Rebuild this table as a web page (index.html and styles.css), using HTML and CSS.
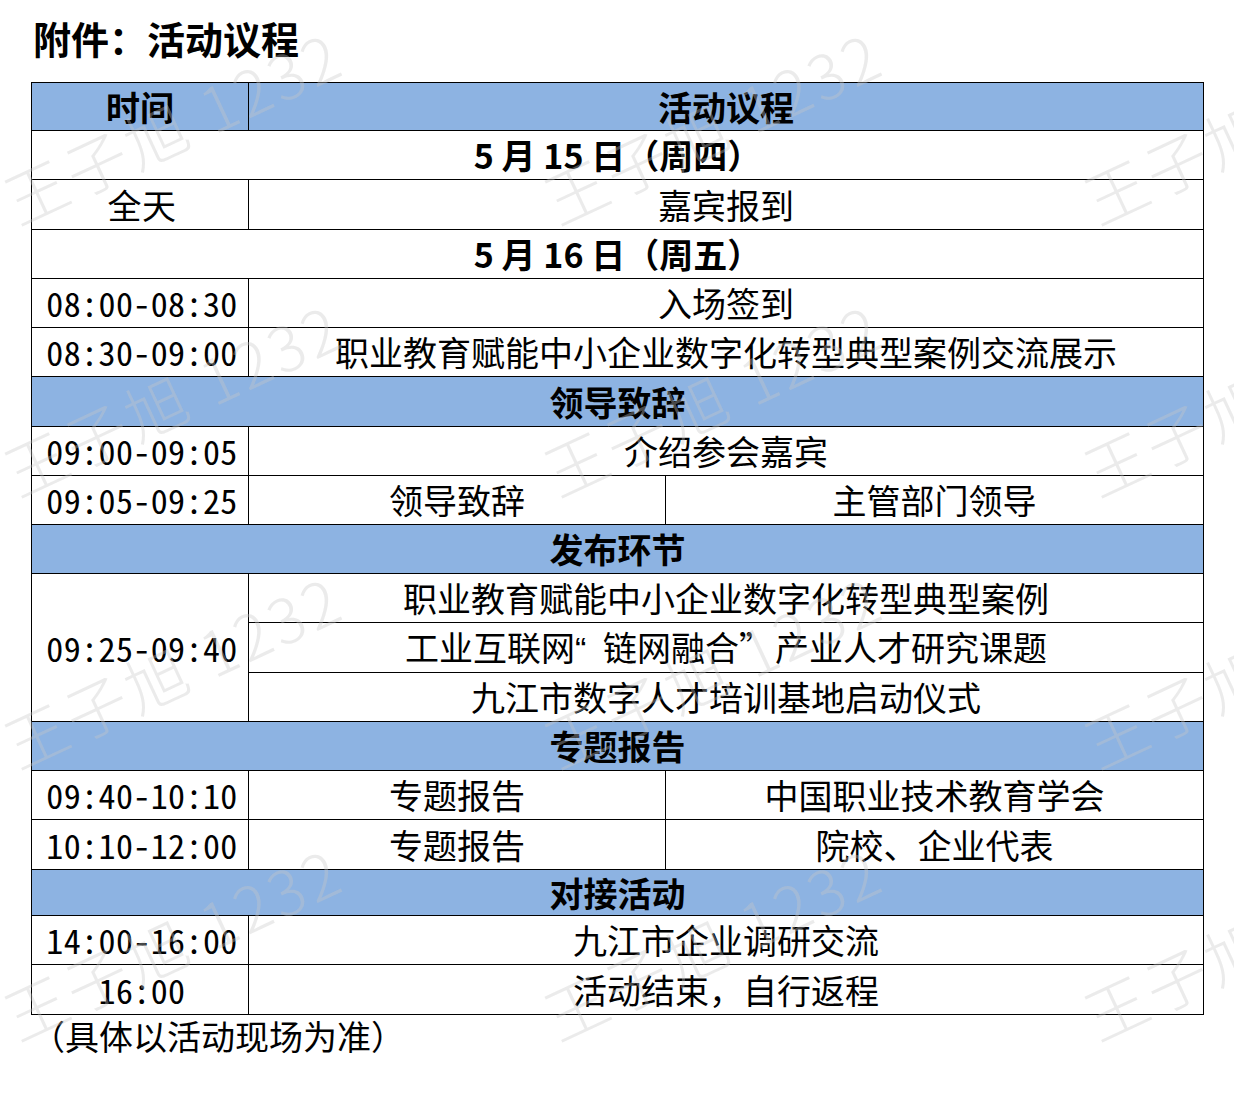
FILE: index.html
```html
<!DOCTYPE html>
<html lang="zh-CN">
<head>
<meta charset="utf-8">
<title>附件：活动议程</title>
<link rel="stylesheet" href="styles.css">
</head>
<body>
<div class="page">
  <h1 class="title">附件：活动议程</h1>
  <table class="agenda">
    <colgroup><col class="c1"><col class="c2"><col class="c3"></colgroup>
    <tr class="band head"><th>时间</th><th colspan="2">活动议程</th></tr>
    <tr class="day"><td colspan="3">5 月 15 日（周四）</td></tr>
    <tr class="tall"><td class="time">全天</td><td colspan="2">嘉宾报到</td></tr>
    <tr class="day"><td colspan="3">5 月 16 日（周五）</td></tr>
    <tr><td class="time">08:00-08:30</td><td colspan="2">入场签到</td></tr>
    <tr><td class="time">08:30-09:00</td><td colspan="2">职业教育赋能中小企业数字化转型典型案例交流展示</td></tr>
    <tr class="band tall"><th colspan="3">领导致辞</th></tr>
    <tr><td class="time">09:00-09:05</td><td colspan="2">介绍参会嘉宾</td></tr>
    <tr><td class="time">09:05-09:25</td><td>领导致辞</td><td>主管部门领导</td></tr>
    <tr class="band"><th colspan="3">发布环节</th></tr>
    <tr><td class="time" rowspan="3">09:25-09:40</td><td colspan="2">职业教育赋能中小企业数字化转型典型案例</td></tr>
    <tr class="tall"><td colspan="2">工业互联网<span class="oq">“</span>链网融合<span class="cq">”</span>产业人才研究课题</td></tr>
    <tr><td colspan="2">九江市数字人才培训基地启动仪式</td></tr>
    <tr class="band"><th colspan="3">专题报告</th></tr>
    <tr><td class="time">09:40-10:10</td><td>专题报告</td><td>中国职业技术教育学会</td></tr>
    <tr class="tall"><td class="time">10:10-12:00</td><td>专题报告</td><td>院校、企业代表</td></tr>
    <tr class="band short"><th colspan="3">对接活动</th></tr>
    <tr><td class="time">14:00-16:00</td><td colspan="2">九江市企业调研交流</td></tr>
    <tr class="tall"><td class="time">16:00</td><td colspan="2">活动结束，自行返程</td></tr>
  </table>
  <p class="note">（具体以活动现场为准）</p>

  <div class="watermark" aria-hidden="true">
    <span class="wm" style="left:7px;top:172px">王子旭 1232</span>
    <span class="wm" style="left:547px;top:172px">王子旭 1232</span>
    <span class="wm" style="left:1087px;top:172px">王子旭 1232</span>
    <span class="wm" style="left:7px;top:444px">王子旭 1232</span>
    <span class="wm" style="left:547px;top:444px">王子旭 1232</span>
    <span class="wm" style="left:1087px;top:444px">王子旭 1232</span>
    <span class="wm" style="left:7px;top:716px">王子旭 1232</span>
    <span class="wm" style="left:547px;top:716px">王子旭 1232</span>
    <span class="wm" style="left:1087px;top:716px">王子旭 1232</span>
    <span class="wm" style="left:7px;top:988px">王子旭 1232</span>
    <span class="wm" style="left:547px;top:988px">王子旭 1232</span>
    <span class="wm" style="left:1087px;top:988px">王子旭 1232</span>
  </div>
</div>
</body>
</html>
```

FILE: styles.css
```css
* { box-sizing: border-box; }

html, body {
  margin: 0;
  padding: 0;
  background: #ffffff;
}

body {
  font-family: "Noto Sans CJK SC", "Noto Sans", sans-serif;
  color: #000;
  width: 1234px;
  height: 1097px;
  overflow: hidden;
}

.page {
  position: relative;
  width: 1234px;
  height: 1097px;
  padding: 15px 0 0 31px;
  overflow: hidden;
}

.title {
  margin: 0 0 21px 2px;
  font-size: 38px;
  line-height: 46px;
  font-weight: 700;
}

.agenda {
  border-collapse: collapse;
  table-layout: fixed;
  width: 1172px;
  font-size: 34px;
}

.c1 { width: 217px; }
.c2 { width: 417px; }
.c3 { width: 538px; }

.agenda td,
.agenda th {
  border: 1px solid #000;
  padding: 0;
  height: 49px;
  line-height: 40px;
  text-align: center;
  vertical-align: middle;
  white-space: nowrap;
  font-weight: 400;
}

.agenda .tall td,
.agenda .tall th { height: 50px; }

.agenda .band th {
  background: #8db3e2;
  font-weight: 700;
}

.agenda .head th { height: 48px; }
.agenda .short th { height: 46px; }

.agenda .day td { font-weight: 700; }

.agenda .time {
  font-feature-settings: "hwid" 1;
  letter-spacing: 0.4px;
  padding-left: 4px;
}

.oq {
  display: inline-block;
  width: 28px;
  text-align: left;
  font-family: "Liberation Sans", sans-serif;
}

.cq {
  margin-right: 2px;
}

.note {
  margin: 1px 0 0 0;
  font-size: 34px;
  line-height: 40px;
}

.watermark {
  position: absolute;
  inset: 0;
  pointer-events: none;
}

.wm {
  position: absolute;
  font-size: 62px;
  line-height: 60px;
  font-weight: 300;
  letter-spacing: 4px;
  white-space: nowrap;
  color: rgba(200, 200, 200, 0.36);
  transform: rotate(-25deg);
  transform-origin: 0 50%;
}
```
